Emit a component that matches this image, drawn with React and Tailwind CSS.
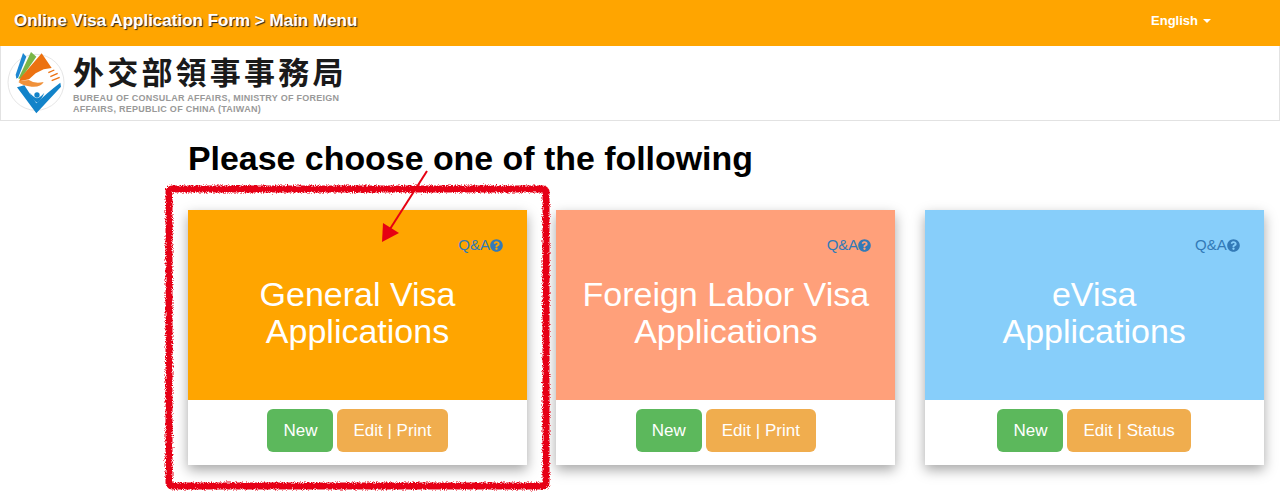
import React from 'react';
import { FaQuestionCircle } from 'react-icons/fa';

function Logo() {
  return (
    <svg viewBox="0 0 240 240" className="w-[80px] h-[80px] shrink-0 -ml-[1px] -mt-[2px]">
      <circle cx="105" cy="115" r="84" fill="none" stroke="#e6e6e6" strokeWidth="3" />
      {/* book pages */}
      <polygon points="66,27 76,38 52,100 46,104 44,92" fill="#1e88d2" />
      <polygon points="90,24 106,38 60,104 52,104" fill="#7ab648" />
      <polygon points="122,28 152,72 128,76 104,88 84,106 54,112 60,100" fill="#ec7211" />
      <path d="M52 114 L58 110 L84 108 Q100 120 128 114 Q120 130 92 128 Q66 126 52 114 Z" fill="#f0913a" />
      <path d="M142 86 L160 78 M148 98 L170 88 M152 110 L176 100" stroke="#ec7211" strokeWidth="4" fill="none" />
      {/* V and figure */}
      <path d="M48 130 L70 124 Q88 152 106 178 Q136 148 178 116 L180 128 L106 208 Z" fill="#1283c9" />
      <circle cx="108" cy="153" r="8" fill="#1283c9" />
      <path d="M86 146 Q98 160 108 163 Q118 160 130 146 Q122 168 108 176 Q94 168 86 146 Z" fill="#1283c9" />
    </svg>
  );
}

function Card({ color, title, edit }) {
  return (
    <div className="w-[339px] h-[255px] bg-white shadow-[0_5px_12px_rgba(0,0,0,0.35)] flex flex-col">
      <div className={`h-[190px] pt-[27px] ${color}`}>
        <div className="flex justify-end items-center pr-[24px] h-[16px] text-[15px] text-[#337ab7]">
          Q&amp;A
          <FaQuestionCircle className="w-[13px] h-[13px]" />
        </div>
        <div className="mt-[23px] text-center text-white text-[34px] leading-[37px]">
          {title[0]}
          <br />
          {title[1]}
        </div>
      </div>
      <div className="flex-1 pt-[9px] flex justify-center items-start gap-[4px]">
        <div className="h-[43px] px-[16px] rounded-[6px] bg-[#5cb85c] text-white text-[17px] flex items-center">New</div>
        <div className="h-[43px] px-[16px] rounded-[6px] bg-[#f0ad4e] text-white text-[17px] flex items-center">{edit}</div>
      </div>
    </div>
  );
}

export default function App() {
  return (
    <div className="relative h-screen w-full overflow-hidden bg-white font-['Liberation_Sans',Arial,sans-serif]">
      {/* Top bar */}
      <div className="h-[46px] bg-[#ffa500] flex justify-between items-center pl-[14px] pr-[69px] pb-[4px]">
        <div className="text-white font-bold text-[17px] [text-shadow:1px_1px_1px_#222]">
          Online Visa Application Form &gt; Main Menu
        </div>
        <div className="flex items-center text-white font-bold text-[13px]">
          English
          <span className="ml-[5px] w-0 h-0 border-x-[4px] border-x-transparent border-t-[4px] border-t-white" />
        </div>
      </div>

      {/* Logo row */}
      <div className="h-[75px] border border-t-0 border-[#e2e2e2] flex items-start pl-[1px]">
        <Logo />
        <div className="-ml-[8px] pt-[7px]">
          <div className="font-['Noto_Sans_CJK_TC',serif] font-bold text-[31px] leading-[35px] tracking-[3.2px] text-[#1a1a1a]">
            外交部領事事務局
          </div>
          <div className="font-bold text-[9px] leading-[10.5px] tracking-[0.27px] text-[#999999] mt-[5px]">
            BUREAU OF CONSULAR AFFAIRS, MINISTRY OF FOREIGN
            <br />
            AFFAIRS, REPUBLIC OF CHINA (TAIWAN)
          </div>
        </div>
      </div>

      {/* Main */}
      <div className="pl-[188px]">
        <h1 className="mt-[17px] font-bold text-[33.9px] leading-[40px] text-black">Please choose one of the following</h1>
        <div className="mt-[32px] flex gap-[29.33px]">
          <Card color="bg-[#ffa500]" title={['General Visa', 'Applications']} edit="Edit | Print" />
          <Card color="bg-[#ffa07a]" title={['Foreign Labor Visa', 'Applications']} edit="Edit | Print" />
          <Card color="bg-[#87cefa]" title={['eVisa', 'Applications']} edit="Edit | Status" />
        </div>
      </div>

      {/* Red hand-drawn annotation over the page */}
      <svg className="absolute inset-0 w-full h-full pointer-events-none" viewBox="0 0 1280 494">
        <defs>
          <filter id="rough" x="-5%" y="-5%" width="110%" height="110%">
            <feTurbulence type="fractalNoise" baseFrequency="0.9" numOctaves="2" seed="4" />
            <feDisplacementMap in="SourceGraphic" scale="5" />
          </filter>
        </defs>
        <rect x="169" y="189" width="377" height="297" rx="3" fill="none" stroke="#e60012" strokeWidth="7" filter="url(#rough)" />
        <line x1="427" y1="171" x2="390" y2="229" stroke="#e60012" strokeWidth="2" />
        <polygon points="382,242 383,223 399,233" fill="#e60012" />
      </svg>
    </div>
  );
}
